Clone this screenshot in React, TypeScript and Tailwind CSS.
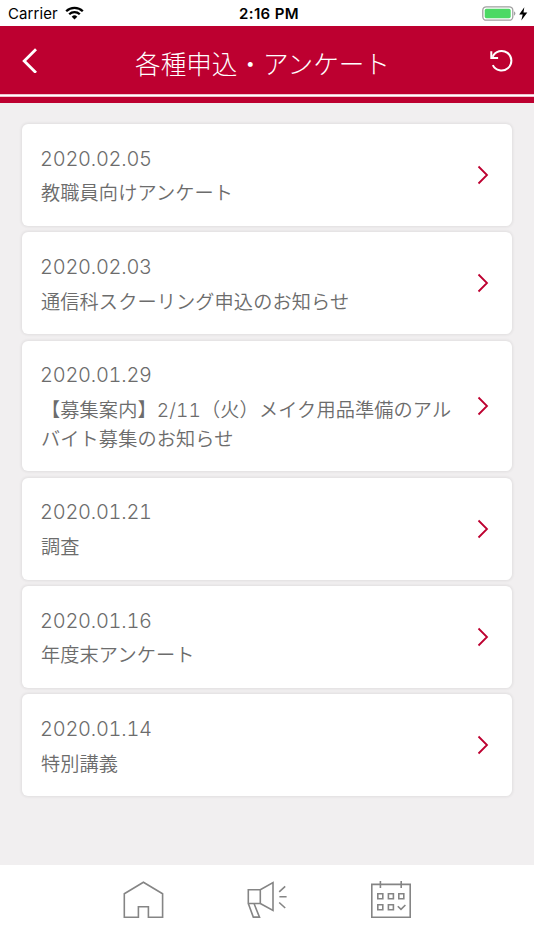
const avisos = [
  { date: "2020.02.05", title: "教職員向けアンケート" },
  { date: "2020.02.03", title: "通信科スクーリング申込のお知らせ" },
  { date: "2020.01.29", title: "【募集案内】2/11（火）メイク用品準備のアルバイト募集のお知らせ" },
  { date: "2020.01.21", title: "調査" },
  { date: "2020.01.16", title: "年度末アンケート" },
  { date: "2020.01.14", title: "特別講義" },
];

function StatusBar() {
  return (
    <div className="grid h-[26px] grid-cols-3 items-center bg-white pt-0.5 pr-[6px] pl-2 font-['Inter',sans-serif] text-[15px] text-black">
      <div className="flex items-center gap-[7px]">
        <span className="tracking-[0.1px]">Carrier</span>
        <svg className="-mt-0.5" width="19" height="14" viewBox="0 0 19 14" fill="none" stroke="currentColor" strokeWidth="2.3">
          <path d="M1.2 5.2a11.8 11.8 0 0 1 16.6 0" />
          <path d="M4.2 8.2a7.6 7.6 0 0 1 10.6 0" />
          <path d="M9.5 13.5 6.7 10.7a4 4 0 0 1 5.6 0Z" fill="currentColor" stroke="none" />
        </svg>
      </div>
      <span className="pl-0.5 text-center font-semibold tracking-[0.35px]">2:16 PM</span>
      <svg className="justify-self-end" width="46" height="16" viewBox="0 0 46 16">
        <rect x="0.8" y="0.8" width="30" height="13.4" rx="3.5" fill="none" stroke="#a0a0a0" strokeWidth="1.3" />
        <rect x="2.7" y="2.7" width="26" height="9.6" rx="1.7" fill="#4cd964" />
        <path d="M32 5.2a2.6 2.6 0 0 1 0 4.6Z" fill="#a0a0a0" />
        <path d="M42.3 1.2 37.2 8.6h3.5l-1.4 5.8 6-8h-3.8Z" fill="#000" />
      </svg>
    </div>
  );
}

function Header() {
  return (
    <header className="h-[77px] bg-[#bd0030] text-white">
      <div className="flex h-[68px] items-center justify-between px-[21px]">
        <svg width="17" height="26" viewBox="0 0 17 26" fill="none" stroke="currentColor" strokeWidth="2.8">
          <path d="M15 2.2 3.2 14 15 25.8" />
        </svg>
        <h1 className="-ml-[2px] pt-1.5 text-[25.6px] leading-none font-light">各種申込・アンケート</h1>
        <svg width="24" height="24" viewBox="0 0 24 24" fill="none" stroke="currentColor" strokeWidth="2">
          <path d="M3 9.2A9.8 9.8 0 1 1 3.2 17.5" transform="translate(.6 -.4)" />
          <path d="M2.3 3.3V10h6.8" />
        </svg>
      </div>
      <div className="h-[3px] border-y border-[#f1c3cf] bg-white" />
    </header>
  );
}

function AvisoCard({ date, title }: { date: string; title: string }) {
  return (
    <li className="flex items-center rounded-md bg-white pt-[20.6px] pr-[23px] pb-[18.2px] pl-[19px] text-[#6c6c6c] shadow-[0_0_3px_1px_rgba(0,0,0,0.07)]">
      <div className="w-[416px] font-['Inter','Noto_Sans_CJK_JP',sans-serif] tabular-nums">
        <p className="-ml-px text-[20px] leading-[28.4px] font-[350] tracking-[-0.25px]">{date}</p>
        <p className="mt-[6.4px] text-[19.2px] leading-[28.4px] font-[350] tracking-[0.1px]">{title}</p>
      </div>
      <svg className="-mt-[2.4px] ml-auto shrink-0" width="12" height="20" viewBox="0 0 12 20" fill="none" stroke="#bd0030" strokeWidth="1.8">
        <path d="M1.5 1.5 10 10l-8.5 8.5" />
      </svg>
    </li>
  );
}

function TabBar() {
  return (
    <nav className="flex h-[85px] items-start justify-center gap-[82px] bg-white pt-4 text-[#858585]">
      <svg width="42" height="40" viewBox="0 0 42 40" fill="none" stroke="currentColor" strokeWidth="1.6">
        <path d="M2.3 12.7 21.4 1.2l19.2 11.5V36.2H26.4V25.7H16.4v10.5H2.3Z" />
      </svg>
      <svg width="42" height="40" viewBox="0 0 42 40" fill="none" stroke="currentColor" strokeWidth="1.6">
        <path d="M2.3 8.7h12v13.8h-12ZM14.3 8.7 27 1.6V29.5L14.3 22.5M2.3 22.5l5 13.6h6.2L8 22.5" />
        <path d="m33.2 10.8 6-5.5M33.4 15.7h7.2M33.2 21.5l6 5.5" />
      </svg>
      <svg width="42" height="40" viewBox="0 0 42 40" fill="none" stroke="currentColor" strokeWidth="1.6">
        <path d="M1.8 3.4h38.4V36.2H1.8ZM10.4 0v7M31.2 0v7" />
        <path d="M7.8 12.8h5v5h-5ZM18.4 12.8h5v5h-5ZM28.8 12.8h5v5h-5ZM7.8 23.8h5v5h-5ZM18.4 23.8h5v5h-5Z" />
        <path d="m27.8 25.2 3.2 3.2 4.4-4.4" />
      </svg>
    </nav>
  );
}

export default function App() {
  return (
    <div className="flex h-[950px] w-[534px] flex-col overflow-hidden bg-[#f1eff0] font-['Noto_Sans_CJK_JP',sans-serif]">
      <StatusBar />
      <Header />
      <main className="flex-1 px-[22px] pt-[21px]">
        <ul className="flex flex-col gap-[6.4px]">
          {avisos.map((aviso) => (
            <AvisoCard key={aviso.date} {...aviso} />
          ))}
        </ul>
      </main>
      <TabBar />
    </div>
  );
}
